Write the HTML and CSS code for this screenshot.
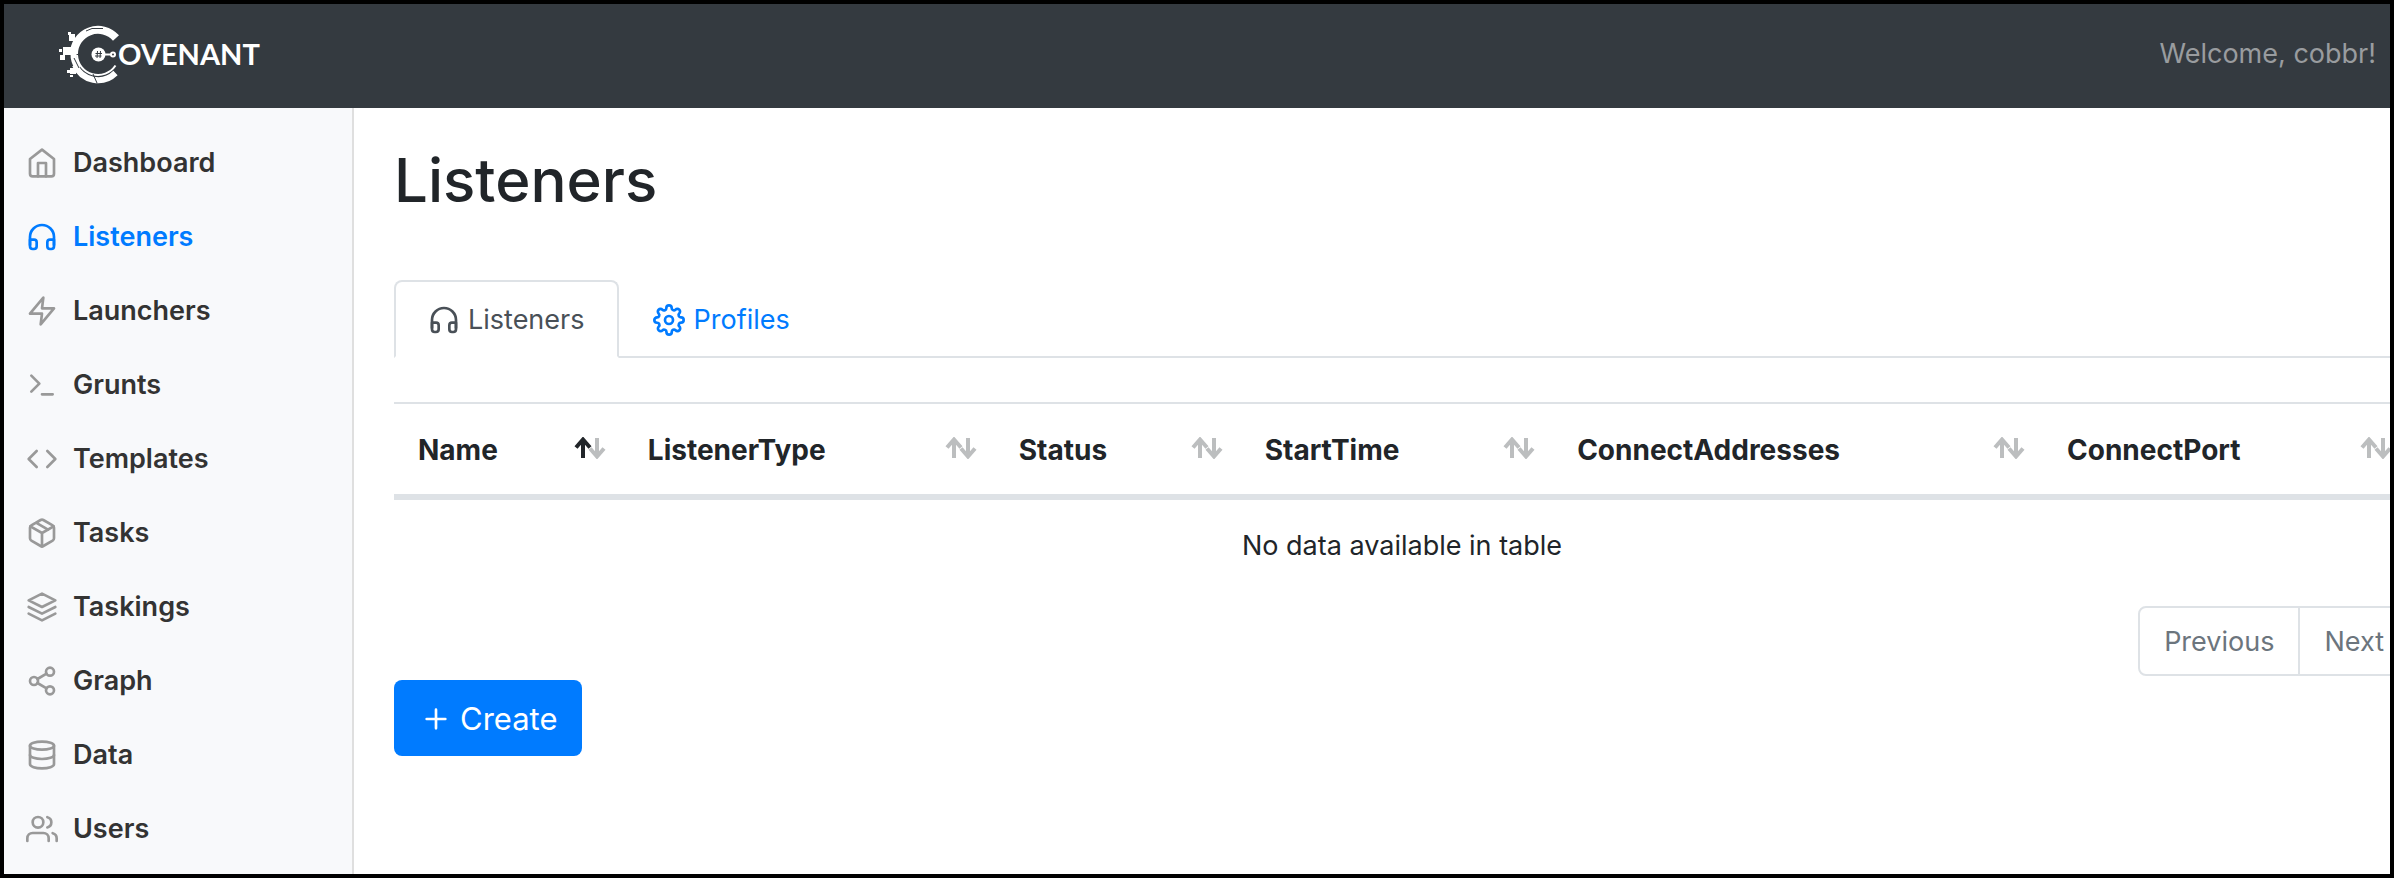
FILE: index.html
```html
<!DOCTYPE html>
<html lang="en">
<head>
<meta charset="utf-8">
<meta name="viewport" content="width=device-width, initial-scale=1">
<title>Covenant - Listeners</title>
<link rel="stylesheet" href="styles.css">
</head>
<body>
<svg class="sprite" aria-hidden="true">
  <symbol id="headphones" viewBox="0 0 24 24"><path d="M3 18v-6a9 9 0 0 1 18 0v6"/><path d="M21 19a2 2 0 0 1-2 2h-1a2 2 0 0 1-2-2v-3a2 2 0 0 1 2-2h3zM3 19a2 2 0 0 0 2 2h1a2 2 0 0 0 2-2v-3a2 2 0 0 0-2-2H3z"/></symbol>
  <symbol id="sort" viewBox="0 0 32 22"><path class="down" d="M23 1v19M16 11.500l7 8l7-8"/><path class="up" d="M9 21V3M2 10.500l7-8l7 8"/></symbol>
</svg>
<div class="app">
  <header class="topbar">
    <a class="brand" href="#" aria-label="Covenant">
      <svg class="mark" viewBox="0 0 66 64" aria-hidden="true">
        <path class="thick" d="M60 16A24 24 0 0 0 18 32"/>
        <path class="mid" d="M17.500 31A24.500 24.500 0 0 0 22 46"/>
        <path class="mid" d="M19 43A25 25 0 0 0 59.500 51"/>
        <path class="thin" d="M21 33A21 21 0 0 0 59.500 43.500"/>
        <path class="cut" d="M30 9l6-2.500h11M37 52l4 9M18 36l5 10"/>
        <path class="fill" d="M13 12h6v7h-6zM12 10h3v3h-3zM7 25h8v8H7zM3 27h3v3H3zM4 33h5v5H4zM14 46h6v6h-6zM11 48h3v3h-3zM14 53h3v2h-3z"/>
        <circle class="fill" cx="42.500" cy="32.500" r="7"/>
        <path class="line" d="M48 32.500h7"/>
        <circle class="line" cx="57" cy="32.500" r="2"/>
        <path class="hash" d="M41.500 29l-.500 7M44.500 29l-.500 7M39.500 31.500h6.500M39 34h6.500"/>
      </svg>
      <span class="wordmark">OVENANT</span>
    </a>
    <span class="welcome">Welcome, cobbr!</span>
  </header>
  <div class="body">
    <nav class="sidebar" aria-label="Main">
      <a class="item" href="#"><svg class="icon" viewBox="0 0 24 24"><path d="M3 9l9-7 9 7v11a2 2 0 0 1-2 2H5a2 2 0 0 1-2-2z"/><path d="M9 22V12h6v10"/></svg>Dashboard</a>
      <a class="item active" href="#" aria-current="page"><svg class="icon"><use href="#headphones"/></svg>Listeners</a>
      <a class="item" href="#"><svg class="icon" viewBox="0 0 24 24"><path d="M13 2L3 14h9l-1 8 10-12h-9l1-8z"/></svg>Launchers</a>
      <a class="item" href="#"><svg class="icon" viewBox="0 0 24 24"><path d="M4 17l6-6-6-6M12 19h8"/></svg>Grunts</a>
      <a class="item" href="#"><svg class="icon" viewBox="0 0 24 24"><path d="M16 18l6-6-6-6M8 6l-6 6 6 6"/></svg>Templates</a>
      <a class="item" href="#"><svg class="icon" viewBox="0 0 24 24"><path d="M16.500 9.400l-9-5.190M21 16V8a2 2 0 0 0-1-1.730l-7-4a2 2 0 0 0-2 0l-7 4A2 2 0 0 0 3 8v8a2 2 0 0 0 1 1.730l7 4a2 2 0 0 0 2 0l7-4A2 2 0 0 0 21 16z"/><path d="M3.270 6.960L12 12.010l8.730-5.050M12 22.080V12"/></svg>Tasks</a>
      <a class="item" href="#"><svg class="icon" viewBox="0 0 24 24"><path d="M12 2L2 7l10 5 10-5-10-5zM2 17l10 5 10-5M2 12l10 5 10-5"/></svg>Taskings</a>
      <a class="item" href="#"><svg class="icon" viewBox="0 0 24 24"><circle cx="18" cy="5" r="3"/><circle cx="6" cy="12" r="3"/><circle cx="18" cy="19" r="3"/><path d="M8.590 13.510l6.830 3.980M15.410 6.510l-6.820 3.980"/></svg>Graph</a>
      <a class="item" href="#"><svg class="icon" viewBox="0 0 24 24"><ellipse cx="12" cy="5" rx="9" ry="3"/><path d="M21 12c0 1.660-4 3-9 3s-9-1.340-9-3"/><path d="M3 5v14c0 1.660 4 3 9 3s9-1.340 9-3V5"/></svg>Data</a>
      <a class="item" href="#"><svg class="icon" viewBox="0 0 24 24"><path d="M17 21v-2a4 4 0 0 0-4-4H5a4 4 0 0 0-4 4v2"/><circle cx="9" cy="7" r="4"/><path d="M23 21v-2a4 4 0 0 0-3-3.870M16 3.130a4 4 0 0 1 0 7.750"/></svg>Users</a>
    </nav>
    <main class="main">
      <h1 class="title">Listeners</h1>
      <div class="tabs">
        <a class="tab current" href="#" aria-current="true"><svg class="icon"><use href="#headphones"/></svg>Listeners</a>
        <a class="tab" href="#"><svg class="icon" viewBox="0 0 24 24"><circle cx="12" cy="12" r="3"/><path d="M19.400 15a1.650 1.650 0 0 0 .33 1.820l.06.06a2 2 0 0 1 0 2.830 2 2 0 0 1-2.830 0l-.06-.06a1.650 1.650 0 0 0-1.820-.33 1.650 1.650 0 0 0-1 1.510V21a2 2 0 0 1-2 2 2 2 0 0 1-2-2v-.09A1.650 1.650 0 0 0 9 19.400a1.650 1.650 0 0 0-1.820.33l-.06.06a2 2 0 0 1-2.830 0 2 2 0 0 1 0-2.830l.06-.06a1.650 1.650 0 0 0 .33-1.820 1.650 1.650 0 0 0-1.510-1H3a2 2 0 0 1-2-2 2 2 0 0 1 2-2h.09A1.650 1.650 0 0 0 4.600 9a1.650 1.650 0 0 0-.33-1.820l-.06-.06a2 2 0 0 1 0-2.830 2 2 0 0 1 2.830 0l.06.06a1.650 1.650 0 0 0 1.820.33H9a1.650 1.650 0 0 0 1-1.510V3a2 2 0 0 1 2-2 2 2 0 0 1 2 2v.09a1.650 1.650 0 0 0 1 1.510 1.650 1.650 0 0 0 1.820-.33l.06-.06a2 2 0 0 1 2.830 0 2 2 0 0 1 0 2.830l-.06.06a1.650 1.650 0 0 0-.33 1.820V9a1.650 1.650 0 0 0 1.510 1H21a2 2 0 0 1 2 2 2 2 0 0 1-2 2h-.09a1.650 1.650 0 0 0-1.510 1z"/></svg>Profiles</a>
      </div>
      <div class="listing">
        <table class="table">
          <colgroup><col class="c-name"><col class="c-type"><col class="c-status"><col class="c-start"><col class="c-address"><col class="c-port"></colgroup>
          <thead>
            <tr>
              <th aria-sort="ascending"><button class="sort asc" type="button">Name<svg class="arrows"><use href="#sort"/></svg></button></th>
              <th><button class="sort" type="button">ListenerType<svg class="arrows"><use href="#sort"/></svg></button></th>
              <th><button class="sort" type="button">Status<svg class="arrows"><use href="#sort"/></svg></button></th>
              <th><button class="sort" type="button">StartTime<svg class="arrows"><use href="#sort"/></svg></button></th>
              <th><button class="sort" type="button">ConnectAddresses<svg class="arrows"><use href="#sort"/></svg></button></th>
              <th><button class="sort" type="button">ConnectPort<svg class="arrows"><use href="#sort"/></svg></button></th>
            </tr>
          </thead>
          <tbody><tr><td class="empty" colspan="6">No data available in table</td></tr></tbody>
        </table>
        <div class="pager">
          <button class="page" type="button">Previous</button>
          <button class="page" type="button">Next</button>
        </div>
      </div>
      <button class="create" type="button"><svg class="icon" viewBox="0 0 24 24"><path d="M12 5v14M5 12h14"/></svg>Create</button>
    </main>
  </div>
</div>
</body>
</html>
```
FILE: styles.css
```css
* { box-sizing: border-box; }

body {
  margin: 0;
  font-family: Inter, "Liberation Sans", sans-serif;
  font-size: 27px;
  line-height: 42px;
  color: #212529;
  background: #fff;
}

a { color: inherit; text-decoration: none; }
button { font: inherit; color: inherit; background: none; border: 0; padding: 0; cursor: pointer; }

.sprite { display: none; }

.icon {
  flex: none;
  width: 32px;
  height: 32px;
  fill: none;
  stroke: currentColor;
  stroke-width: 2;
  stroke-linecap: round;
  stroke-linejoin: round;
}

.app {
  display: flex;
  flex-direction: column;
  min-height: 100vh;
  border: 4px solid #000;
  overflow: hidden;
}

.topbar {
  display: flex;
  align-items: center;
  justify-content: space-between;
  height: 104px;
  padding: 0 14px 4px 52px;
  background: #343a40;
}

.brand { display: flex; align-items: center; color: #fff; }
.mark { width: 66px; height: 64px; margin-right: -4px; fill: none; stroke: #fff; }
.mark .fill { fill: #fff; stroke: none; }
.mark .thick { stroke-width: 8; }
.mark .mid { stroke-width: 6; }
.mark .thin { stroke-width: 2; }
.mark .line { stroke-width: 2; }
.mark .cut { stroke: #343a40; stroke-width: 1; }
.mark .hash { stroke: #343a40; stroke-width: 1; }
.wordmark { font: 700 29px/42px Lato, sans-serif; }
.welcome { color: #999c9f; }

.body { display: flex; flex: 1; }

.sidebar {
  flex: none;
  width: 350px;
  padding-top: 18px;
  background: #f8f9fb;
  border-right: 2px solid #dfdfdf;
}

.item {
  display: flex;
  align-items: center;
  gap: 15px;
  padding: 16px 22px;
  font-weight: 600;
  color: #333;
}
.item .icon { color: #999; }
.item.active, .item.active .icon { color: #007bff; }

.main { flex: 1; min-width: 0; padding: 32px 0 0 40px; }

.title {
  margin: 0 0 60px;
  font-size: 60px;
  font-weight: 500;
  line-height: 80px;
}

.tabs { display: flex; border-bottom: 2px solid #dee2e6; }
.tab {
  display: flex;
  align-items: center;
  gap: 8px;
  margin-bottom: -2px;
  padding: 17px 33px 15px 32px;
  border: 2px solid transparent;
  border-radius: 8px 8px 0 0;
  color: #007bff;
}
.tab.current {
  color: #495057;
  background: #fff;
  border-color: #dee2e6 #dee2e6 #fff;
}

/* The listing runs past the right edge of the window and is clipped there. */
.listing { margin: 44px -20px 0 0; }

.table {
  width: 100%;
  table-layout: fixed;
  border-collapse: separate;
  border-spacing: 0;
}
.c-name { width: 11.4%; }
.c-type { width: 18.4%; }
.c-status { width: 12.2%; }
.c-start { width: 15.5%; }
.c-address { width: 24.3%; }
.c-port { width: 18.2%; }

.table th {
  padding: 25px 18px 23px 24px;
  border-top: 2px solid #dee2e6;
  border-bottom: 6px solid #dee2e6;
}
.sort {
  display: flex;
  justify-content: space-between;
  width: 100%;
  font-size: 28px;
  font-weight: 700;
}
.arrows {
  width: 32px;
  height: 22px;
  margin-top: 8px;
  fill: none;
  stroke: #bcbebf;
  stroke-width: 4;
}
.sort.asc .arrows { --up: #212529; }
.up { stroke: var(--up, #bcbebf); }
.empty { padding: 25px 24px 23px; text-align: center; }

.pager { display: flex; justify-content: flex-end; margin-top: 16px; color: #6c757d; }
.page { padding: 13px 24px 11px; border: 2px solid #dee2e6; }
.page:first-child { border-radius: 8px 0 0 8px; }
.page:last-child { margin-left: -2px; border-radius: 0 8px 8px 0; }

.create {
  display: flex;
  align-items: center;
  gap: 8px;
  margin-top: 4px;
  padding: 17px 24px 15px 26px;
  border-radius: 8px;
  font-size: 31px;
  line-height: 44px;
  color: #fff;
  background: #007bff;
}
```
